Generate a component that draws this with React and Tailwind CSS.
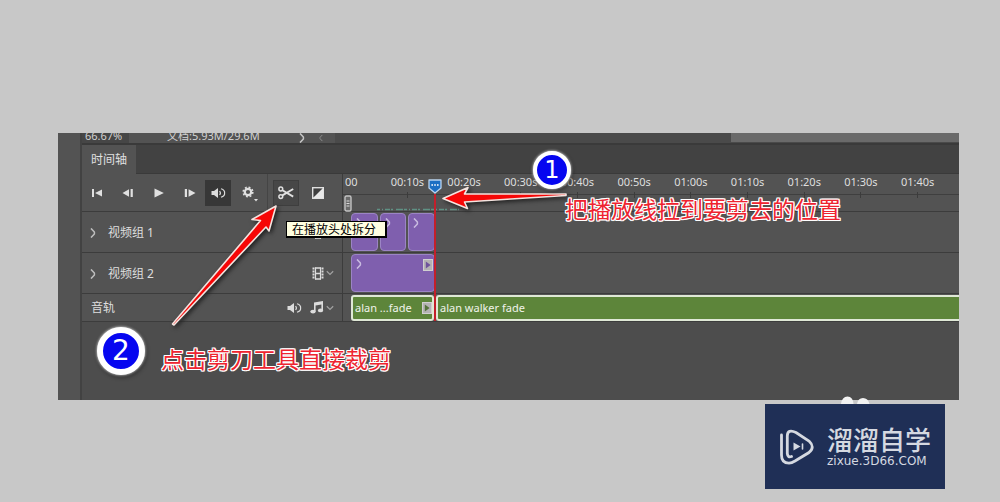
import { useState } from "react";

const ticks = [
  "00:10s",
  "00:20s",
  "00:30s",
  "00:40s",
  "00:50s",
  "01:00s",
  "01:10s",
  "01:20s",
  "01:30s",
  "01:40s",
];

const Chevron = ({ className }) => (
  <svg viewBox="0 0 6 10" className={className} fill="none" stroke="currentColor" strokeWidth="1.5">
    <path d="M1 0.4 L4.4 4 V6 L1 9.6" strokeLinejoin="round" />
  </svg>
);

const DownChevron = () => (
  <svg viewBox="0 0 8 6" className="w-2 h-[6px]" fill="none" stroke="#a0a0a0" strokeWidth="1.3">
    <path d="M0.8 1.2 L4 4.4 L7.2 1.2" />
  </svg>
);

const FilmIcon = () => (
  <svg viewBox="0 0 12 13" className="w-3 h-[13px]" fill="none" stroke="#dcdcdc">
    <path d="M1.5 0.5 V12.5 M10.5 0.5 V12.5" strokeWidth="2" strokeDasharray="2 1" />
    <path d="M3.5 0.5 V12.5 M8.5 0.5 V12.5" strokeWidth="1.2" />
    <path d="M3 1 H9 M3 6.5 H9 M3 12 H9" strokeWidth="1.4" />
  </svg>
);

const NoteIcon = () => (
  <svg viewBox="0 0 14 13" className="w-[14px] h-[13px]" fill="#dcdcdc">
    <path d="M4 1.5 L13 0 V9 H11.4 V3.4 L5.6 4.4 V10.5 H4 Z" />
    <ellipse cx="3" cy="10.6" rx="2.7" ry="1.9" />
    <ellipse cx="10.5" cy="9.4" rx="2.6" ry="1.9" />
  </svg>
);

const SpeakerIcon = () => (
  <svg viewBox="0 0 15 12" className="w-[15px] h-3" fill="none" stroke="#dcdcdc">
    <path d="M0.5 4 H3 L7 1 V11 L3 8 H0.5 Z" fill="#dcdcdc" stroke="none" />
    <path d="M8.6 4 Q10.2 6 8.6 8" strokeWidth="1.2" />
    <path d="M10 1.8 Q14 3 13.6 6 Q14 9 10 10.2" strokeWidth="1.2" />
  </svg>
);

const ClipArrow = ({ color }) => (
  <svg viewBox="0 0 10 12" className="w-[10px] h-3 shrink-0">
    <rect x="0.5" y="0.5" width="9" height="11" fill="#b4b2b4" stroke="#d0cfd0" />
    <path d="M2.8 2.6 L7.6 6 L2.8 9.4 Z" fill={color} />
  </svg>
);

const ToolButton = ({ label, children }) => (
  <button type="button" aria-label={label} className="w-[31px] h-[26px] flex items-center justify-center">
    <svg viewBox="0 0 12 10" className="w-3 h-[10px]" fill="#e0e0e0">
      {children}
    </svg>
  </button>
);

const Toolbar = () => {
  const [muted, setMuted] = useState(false);

  return (
    <div className="h-[38px] flex items-center border-b border-[#3c3c3c]">
      <div className="-ml-px flex">
        <ToolButton label="转到第一帧">
          <path d="M1 1 H3 V9 H1 Z M11 1.4 V8.6 L4 5 Z" />
        </ToolButton>
        <ToolButton label="上一帧">
          <path d="M0.5 5 L7 1.2 V8.8 Z M8.6 1 H10.8 V9 H8.6 Z" />
        </ToolButton>
        <ToolButton label="播放">
          <path d="M1.5 0.4 L10.8 5 L1.5 9.6 Z" />
        </ToolButton>
        <ToolButton label="下一帧">
          <path d="M0.8 1 H3 V9 H0.8 Z M4.6 1.2 L11.5 5 L4.6 8.8 Z" />
        </ToolButton>
      </div>
      <button
        type="button"
        aria-label="静音"
        aria-pressed={muted}
        onClick={() => setMuted(!muted)}
        className="w-[26px] h-[26px] bg-[#373737] flex items-center justify-center"
      >
        <SpeakerIcon />
      </button>
      <button type="button" aria-label="设置" className="w-9 h-[26px] flex items-center justify-center">
        <svg viewBox="0 0 18 18" className="w-[18px] h-[18px]">
          <circle cx="8" cy="8" r="3.2" fill="none" stroke="#e0e0e0" strokeWidth="2.2" />
          <circle cx="8" cy="8" r="4.8" fill="none" stroke="#e0e0e0" strokeWidth="1.6" strokeDasharray="1.9 1.87" />
          <path d="M14 15 H18 L16 17.4 Z" fill="#e0e0e0" />
        </svg>
      </button>
      <div className="w-px h-full mr-[5px] bg-[#454545]" />
      <button
        type="button"
        aria-label="在播放头处拆分"
        className="w-[26px] h-[26px] bg-[#474747] border border-[#3e3e3e] flex items-center justify-center"
      >
        <svg viewBox="0 0 16 14" className="w-4 h-[14px] shrink-0" fill="none" stroke="#e0e0e0">
          <circle cx="2.8" cy="3" r="1.9" strokeWidth="1.5" />
          <circle cx="2.8" cy="10.6" r="1.9" strokeWidth="1.5" />
          <path d="M4.4 4.2 L15.2 10.6 M4.4 9.4 L15.2 3" strokeWidth="1.9" />
        </svg>
      </button>
      <button type="button" aria-label="过渡效果" className="w-[37px] h-[26px] flex items-center justify-center">
        <svg viewBox="0 0 12 12" className="w-3 h-3">
          <rect x="0.7" y="0.7" width="10.6" height="10.6" fill="#3f3f3f" stroke="#e0e0e0" strokeWidth="1.4" />
          <path d="M11.3 0.7 V11.3 H0.7 Z" fill="#e8e8e8" />
        </svg>
      </button>
    </div>
  );
};

const GroupRow = ({ name }) => (
  <div className="h-[41px] flex items-center pl-2 pr-2 border-b border-[#3c3c3c]">
    <button type="button" className="flex items-center gap-3 pt-px text-xs text-[#dedede]">
      <Chevron className="w-[6px] h-[10px] text-[#bdbdbd]" />
      {name}
    </button>
    <button type="button" aria-label="轨道选项" className="ml-auto flex items-center gap-[2px]">
      <FilmIcon />
      <DownChevron />
    </button>
  </div>
);

const Clip = ({ className, children }) => (
  <div className={`flex items-start justify-between p-1 pr-px rounded-[4px] bg-[#7f5fae] border border-[#9b84c4] ${className}`}>
    <Chevron className="w-[6px] h-[10px] text-[#c9bbe0]" />
    {children}
  </div>
);

const Tracks = () => (
  <div className="relative flex-1 min-w-0 overflow-hidden">
    {/* time ruler */}
    <div className="relative h-[38px] border-b border-[#3c3c3c] text-[11px] leading-4 text-[#dedede]">
      <div className="h-[21px] border-b border-[#3f3f3f]">
        <span className="absolute left-[2px]">00</span>
        <div className="ml-9 w-[567px] grid grid-cols-10 text-center">
          {ticks.map((t) => (
            <div key={t}>
              {t}
              <div className="mx-auto mt-[2px] w-px h-[6px] bg-[#3c3c3c]" />
            </div>
          ))}
        </div>
      </div>
      <svg viewBox="0 0 8 17" className="absolute left-px bottom-[-1px] w-2 h-[17px]">
        <rect x="1" y="1" width="6" height="15" rx="1.5" fill="#6a6a6a" stroke="#c4c4c4" strokeWidth="1.4" />
        <path d="M2.5 6 H5.5 M2.5 8.5 H5.5 M2.5 11 H5.5" stroke="#d8d8d8" />
      </svg>
      <svg viewBox="0 0 82 3" className="absolute left-[34px] bottom-0 w-[82px] h-[3px]">
        <path d="M0 1.5 H82" stroke="#5f9184" strokeWidth="1.4" strokeDasharray="3 2 1 2 5 1 2 3 7 1" />
      </svg>
    </div>

    <div className="h-[41px] flex gap-[2px] pl-2 pt-px pb-px border-b border-[#3c3c3c]">
      <Clip className="w-[27px]" />
      <Clip className="w-[26px]" />
      <Clip className="w-[27px]" />
    </div>
    <div className="h-[41px] flex pl-2 pt-px pb-px border-b border-[#3c3c3c]">
      <Clip className="w-[84px]">
        <ClipArrow color="#6f539c" />
      </Clip>
    </div>
    <div className="h-7 flex gap-[2px] pl-2 pt-px text-[11px] text-[#f0f3ea] border-b border-[#3c3c3c]">
      <div className="w-[83px] h-[26px] flex items-center justify-between pl-[2px] bg-[#5d853a] border-2 border-[#dfe8d6] rounded-[3px] whitespace-nowrap">
        alan ...fade
        <ClipArrow color="#55733c" />
      </div>
      <div className="flex-1 h-[26px] flex items-center pl-[2px] bg-[#5d853a] border-2 border-r-0 border-[#dfe8d6] rounded-l-[3px]">
        alan walker fade
      </div>
    </div>

    {/* playhead */}
    <div className="absolute top-[5px] left-[84px] w-4 h-[142px] flex flex-col items-center">
      <svg viewBox="0 0 14 15" className="w-[14px] h-[15px] shrink-0">
        <path d="M1 1 H13 V9 L7 14 L1 9 Z" fill="#1c6fc4" stroke="#b9d3ee" strokeWidth="1.3" strokeLinejoin="round" />
        <path d="M3.4 6 H10.8" stroke="#fff" strokeWidth="1.6" strokeDasharray="1.6 1.2" />
      </svg>
      <div className="w-[2px] flex-1 bg-[#c31f2b]" />
    </div>
  </div>
);

const noteText =
  "absolute whitespace-nowrap text-[23px] leading-7 font-normal text-[#ee2430] [text-shadow:1px_0_#fff,-1px_0_#fff,0_1px_#fff,0_-1px_#fff,1px_1px_#fff,-1px_-1px_#fff,1px_-1px_#fff,-1px_1px_#fff]";

const badge =
  "absolute flex items-center justify-center rounded-full bg-[#0606f0] border-white text-white font-['DejaVu_Sans',sans-serif] shadow-[0_0_3px_#fff,1px_2px_4px_#222]";

const Annotations = () => (
  <div className="absolute inset-0 pointer-events-none">
    <div className="absolute left-[228px] top-[88px] h-[17px] w-[101px] pl-[5px] bg-[#ffffe1] border border-b-2 border-r-2 border-black text-black text-xs leading-4 whitespace-nowrap">
      在播放头处拆分
    </div>
    <svg
      viewBox="0 0 560 200"
      className="absolute left-0 top-0 w-[560px] h-[200px] drop-shadow-[2px_2px_2px_#222]"
      fill="#f60606"
      stroke="#f4e4e0"
      strokeWidth="1.6"
      strokeLinejoin="round"
    >
      <path d="M385 65.5 L410 54.5 L406.5 61 L508 61 L508 62.5 L406.5 69 L409.5 75.5 Z" />
      <path d="M218 73 L194 86.5 L202.5 87.5 L114.5 191 L116 192 L208 94 L211 98 Z" />
    </svg>
    <div className={`${badge} left-[475px] top-[18px] w-[38px] h-[38px] border-[4px] text-2xl leading-none`}>1</div>
    <div className={`${badge} left-[39px] top-[194px] w-12 h-12 border-[6px] text-[28px] leading-none`}>2</div>
    <p className={`${noteText} left-[507px] top-[62px]`}>把播放线拉到要剪去的位置</p>
    <p className={`${noteText} left-[103px] top-[212px]`}>点击剪刀工具直接裁剪</p>
  </div>
);

const TimelinePanel = () => (
  <div className="relative flex bg-[#535353]">
    <div className="w-6 shrink-0 border-r-2 border-[#424242]" />
    <div className="flex-1 min-w-0">
      {/* document status bar */}
      <div className="h-[10px] flex items-end overflow-hidden text-[11px] leading-[14px] text-[#d2d2d2]">
        <div className="w-[47px] pl-[3px] bg-[#464646]">66.67%</div>
        <div className="w-[170px] pl-[38px] whitespace-nowrap">文档:5.93M/29.6M</div>
        <div className="w-9 h-full flex items-center justify-between pr-3">
          <Chevron className="w-[6px] h-[10px] text-[#c4c4c4]" />
          <Chevron className="w-1 h-2 rotate-180 text-[#8c8c8c]" />
        </div>
        <div className="flex-1 h-full bg-[#4a4a4a] flex justify-end">
          <div className="w-[228px] h-[9px] bg-[#6a6a6a]" />
        </div>
      </div>

      <div className="h-[31px] flex bg-[#424242] border-t-2 border-b border-[#3a3a3a]">
        <button type="button" className="-mb-px pt-px px-[9px] bg-[#535353] text-xs text-[#e0e0e0]">
          时间轴
        </button>
      </div>

      <div className="flex">
        <div className="w-[261px] shrink-0 border-r border-[#3c3c3c]">
          <Toolbar />
          <GroupRow name="视频组 1" />
          <GroupRow name="视频组 2" />
          <div className="h-7 flex items-center pl-[9px] pr-2 text-xs text-[#dedede] border-b border-[#3c3c3c]">
            音轨
            <button type="button" aria-label="静音音轨" className="ml-auto mr-2">
              <SpeakerIcon />
            </button>
            <button type="button" aria-label="音轨选项" className="flex items-center gap-[2px]">
              <NoteIcon />
              <DownChevron />
            </button>
          </div>
        </div>
        <Tracks />
      </div>

      <div className="h-[78px] bg-[#4d4d4d]" />
    </div>
    <Annotations />
  </div>
);

const Watermark = () => (
  <a
    href="#zixue"
    className="relative w-[180px] h-[85px] flex items-center gap-3 pl-[14px] bg-[#1f2f56] text-[#d5d9e1]"
  >
    <svg viewBox="0 0 36 8" className="absolute left-[72px] -top-2 w-9 h-2" fill="#f2f2f2">
      <path d="M4 8 Q5 0.5 10.5 0.5 Q16 0.5 16.5 8 Z M20 8 Q21 2 26 2 Q31 2 32.5 8 Z" />
    </svg>
    <svg viewBox="0 0 36 36" className="w-9 h-9 shrink-0" fill="none" stroke="currentColor" strokeLinecap="round">
      <path
        d="M2.5 6 V26 Q2.5 34.2 10 34.2 Q12.5 34 16 32 L30 23.5 Q36.5 18 30 12 L17 3.5 Q8.5 -0.5 8.3 7 V24.5 Q8.8 29 12.5 27.5"
        strokeWidth="2.8"
      />
      <path d="M14.5 13.5 L21.5 17.5 L14.5 21.5 Z" fill="currentColor" stroke="none" />
      <path d="M23.5 15 V20" strokeWidth="1.6" />
    </svg>
    <span className="flex flex-col">
      <span className="text-[26px] leading-[38px] font-medium">溜溜自学</span>
      <span className="-mt-[6px] mb-1 font-['DejaVu_Sans',sans-serif] text-xs leading-4">zixue.3D66.COM</span>
    </span>
  </a>
);

const App = () => {
  return (
    <div className="min-h-screen pt-[133px] pl-[58px] pr-[41px] bg-[#c8c8c8] font-['Noto_Sans','Noto_Sans_CJK_SC',sans-serif]">
      <TimelinePanel />
      <div className="flex justify-end pt-1 pr-[14px]">
        <Watermark />
      </div>
    </div>
  );
};

export default App;
